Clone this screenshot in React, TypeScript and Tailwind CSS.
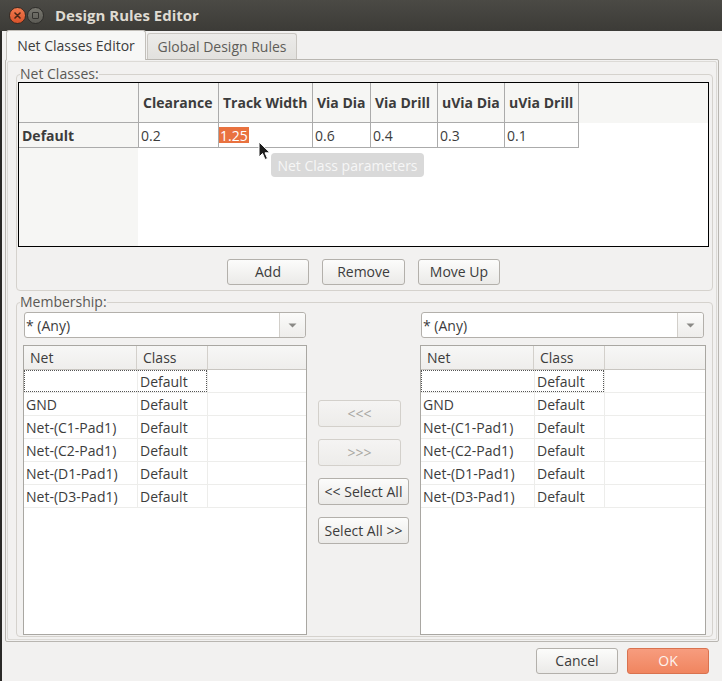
import React from "react";

const font = { fontFamily: '"Open Sans", "DejaVu Sans", sans-serif' };

function Btn({ label, w, disabled, primary }: { label: string; w: string; disabled?: boolean; primary?: boolean }) {
  const base = "flex items-center justify-center rounded-[3px] border text-[14px] leading-none " + w;
  if (primary)
    return (
      <div className={base + " h-[26px] border-[#d9724f] bg-gradient-to-b from-[#f79c7e] to-[#f0855f] text-[#fdf3ee]"}>{label}</div>
    );
  if (disabled)
    return (
      <div className={base + " h-[27px] border-[#d3d0cb] bg-gradient-to-b from-[#f5f4f3] to-[#edecea] text-[#a9a7a3]"}>{label}</div>
    );
  return (
    <div className={base + " border-[#b3b0ab] bg-gradient-to-b from-[#fcfcfb] to-[#ebeae8] text-[#3c3c3c]"}>{label}</div>
  );
}

function Combo() {
  return (
    <div className="flex h-[26px] rounded-[3px] border border-[#b3b0ab] bg-white text-[14px] text-[#3c3c3c]">
      <div className="flex flex-1 items-center pl-[1px]">* (Any)</div>
      <div className="flex w-[26px] items-center justify-center rounded-r-[3px] border-l border-[#d2cfca] bg-gradient-to-b from-[#fbfbfa] to-[#eeedeb]">
        <svg width="9" height="5" viewBox="0 0 9 5">
          <path d="M0.5 0.5 L8.5 0.5 L4.5 4.5 Z" fill="#8a8986" />
        </svg>
      </div>
    </div>
  );
}

const nets = ["", "GND", "Net-(C1-Pad1)", "Net-(C2-Pad1)", "Net-(D1-Pad1)", "Net-(D3-Pad1)"];

function NetList({ netW, classW, focusW }: { netW: string; classW: string; focusW: string }) {
  return (
    <div className="relative flex h-[290px] flex-col border border-[#a9a7a2] bg-white text-[14px] text-[#3c3c3c]">
      <div className="flex h-[24px] shrink-0 border-b border-[#c9c6c1] bg-gradient-to-b from-[#f7f7f6] to-[#efeeec]">
        <div className={"flex items-center border-r border-[#d3d0cb] pl-[6px] " + netW}>Net</div>
        <div className={"flex items-center border-r border-[#d3d0cb] pl-[6px] " + classW}>Class</div>
        <div className="flex-1" />
      </div>
      {nets.map((n, i) => (
        <div key={i} className="flex h-[23px] shrink-0 border-b border-[#ededeb]">
          <div className={"flex items-center pl-[2px] " + netW}>{n}</div>
          <div className={"flex items-center border-l border-r border-[#ededeb] pl-[2px] " + classW}>Default</div>
          <div className="flex-1" />
        </div>
      ))}
      <div className="flex-1" />
      <div className={"pointer-events-none absolute left-0 top-[24px] h-[22px] border border-dotted border-[#555] " + focusW} />
    </div>
  );
}

export default function App() {
  const headers: [string, string][] = [
    ["Clearance", "w-[80px]"],
    ["Track Width", "w-[94px]"],
    ["Via Dia", "w-[58px]"],
    ["Via Drill", "w-[67px]"],
    ["uVia Dia", "w-[67px]"],
    ["uVia Drill", "w-[74px]"],
  ];
  const values = ["0.2", "1.25", "0.6", "0.4", "0.3", "0.1"];
  const line = "border-[#ababab]";

  return (
    <div style={font} className="relative flex h-[681px] w-[722px] flex-col overflow-hidden bg-[#f2f1f0] text-[#3c3c3c]">
      {/* title bar */}
      <div className="flex h-[31px] shrink-0 items-center bg-gradient-to-b from-[#4b4a45] to-[#3c3b37]">
        <div className="ml-[9px] flex h-[17px] w-[17px] items-center justify-center rounded-full border border-[#3a2a22] bg-gradient-to-b from-[#f27a4e] to-[#d9532a]">
          <svg width="7" height="7" viewBox="0 0 7 7">
            <path d="M1 1 L6 6 M6 1 L1 6" stroke="#4a2616" strokeWidth="1.6" strokeLinecap="round" />
          </svg>
        </div>
        <div className="ml-[1px] flex h-[17px] w-[17px] items-center justify-center rounded-full border border-[#2e2d2a] bg-gradient-to-b from-[#78776f] to-[#5c5b55]">
          <div className="h-[7px] w-[7px] rounded-[1px] border border-[#34332f]" />
        </div>
        <div className="ml-[11px] text-[15px] font-bold text-[#dfdbd2]">Design Rules Editor</div>
      </div>

      {/* tabs */}
      <div className="flex h-[28px] shrink-0 items-end pl-[6px]">
        <div className="relative z-10 -mb-px flex h-[30px] w-[140px] items-center justify-center rounded-t-[3px] border border-b-0 border-[#c2bfba] bg-[#f7f7f6] text-[14px] text-[#3c3c3c]">
          Net Classes Editor
        </div>
        <div className="ml-[1px] flex h-[26px] w-[150px] items-center justify-center rounded-t-[3px] border border-b-0 border-[#c9c6c1] bg-gradient-to-b from-[#ecebe9] to-[#e2e1de] text-[14px] text-[#5e5d59]">
          Global Design Rules
        </div>
      </div>

      {/* tab panel */}
      <div className="ml-[5px] mr-[3px] flex h-[583px] shrink-0 flex-col rounded-[2px] border border-[#b9b6b1] bg-[#f2f1f0] p-[1px]">
        <div className="flex flex-1 flex-col rounded-[2px] border border-[#dcdad6] pl-[8px] pr-[3px] pt-[4px]">
          {/* Net classes group */}
          <fieldset className="rounded-[4px] border border-[#d5d2cd] p-0">
            <legend className="ml-[3px] h-[16px] text-[14px] leading-[16px] text-[#5a5955]">Net Classes:</legend>
            <div className="pb-[5px] pl-[1px] pr-[3px]">
              <div className="flex h-[165px] flex-col border border-black bg-white text-[14px]">
                <div className="flex h-[40px] shrink-0 bg-[#f6f6f4]">
                  <div className={"w-[120px] border-b border-r " + line} />
                  {headers.map(([h, w]) => (
                    <div key={h} className={"flex items-center border-b border-r pl-[4px] font-bold " + line + " " + w}>
                      {h}
                    </div>
                  ))}
                  <div className="flex-1" />
                </div>
                <div className="flex h-[25px] shrink-0">
                  <div className={"flex w-[120px] items-center border-b border-r bg-[#f6f6f4] pl-[3px] pt-[1px] font-bold " + line}>
                    Default
                  </div>
                  {headers.map(([h, w], i) => (
                    <div key={h} className={"flex items-center border-b border-r " + line + " " + w + (i === 1 ? " pl-0" : " pl-[2px]")}>
                      {i === 1 ? (
                        <span className="flex h-[16px] items-center bg-[#e9723f] pl-[1px] pr-[1px] text-white">{values[i]}</span>
                      ) : (
                        values[i]
                      )}
                    </div>
                  ))}
                  <div className="flex-1" />
                </div>
                <div className="flex flex-1">
                  <div className="w-[119px] bg-[#f6f6f4]" />
                  <div className="flex-1" />
                </div>
              </div>
              <div className="mt-[12px] flex justify-center gap-[13px]">
                <div className="flex h-[26px]"><Btn label="Add" w="w-[82px]" /></div>
                <div className="flex h-[26px]"><Btn label="Remove" w="w-[83px]" /></div>
                <div className="flex h-[26px]"><Btn label="Move Up" w="w-[82px]" /></div>
              </div>
            </div>
          </fieldset>

          {/* Membership group */}
          <fieldset className="mt-[3px] rounded-[4px] border border-[#d5d2cd] p-0">
            <legend className="ml-[3px] h-[16px] text-[14px] leading-[16px] text-[#5a5955]">Membership:</legend>
            <div className="mt-[2px] flex pb-[1px] pl-[6px] pr-[6px]">
              <div className="flex w-[284px] flex-col">
                <div className="mx-[1px]"><Combo /></div>
                <div className="mt-[7px]">
                  <NetList netW="w-[113px]" classW="w-[71px]" focusW="w-[183px]" />
                </div>
              </div>
              <div className="flex w-[113px] flex-col items-start gap-[12px] pl-[11px] pt-[88px]">
                <Btn label="<<<" w="w-[83px]" disabled />
                <Btn label=">>>" w="w-[83px]" disabled />
                <div className="flex h-[27px]"><Btn label="<< Select All" w="w-[91px]" /></div>
                <div className="flex h-[27px]"><Btn label="Select All >>" w="w-[91px]" /></div>
              </div>
              <div className="flex w-[286px] flex-col">
                <div className="ml-[1px] mr-[2px]"><Combo /></div>
                <div className="mt-[7px]">
                  <NetList netW="w-[113px]" classW="w-[71px]" focusW="w-[183px]" />
                </div>
              </div>
            </div>
          </fieldset>
        </div>
      </div>

      {/* bottom buttons */}
      <div className="mt-[6px] flex justify-end gap-[9px] pr-[13px]">
        <div className="flex h-[26px]"><Btn label="Cancel" w="w-[82px]" /></div>
        <Btn label="OK" w="w-[82px]" primary />
      </div>

      {/* left window edge */}
      <div className="absolute left-0 top-[31px] h-[650px] w-[2px] bg-[#2a2927]" />

      {/* cursor */}
      <svg className="absolute left-[258px] top-[141px]" width="14" height="21" viewBox="0 0 14 21">
        <path d="M1 1 L1 16 L4.5 12.5 L7 18.5 L9.5 17.5 L7 11.8 L12 11.8 Z" fill="#1c1c1c" stroke="#ffffff" strokeWidth="1" strokeLinejoin="round" />
      </svg>

      {/* tooltip */}
      <div className="absolute left-[271px] top-[153px] flex h-[24px] w-[153px] items-center justify-center rounded-[4px] bg-[#d9d9d9] text-[14px] text-[#f6f6f6]">
        Net Class parameters
      </div>
    </div>
  );
}
